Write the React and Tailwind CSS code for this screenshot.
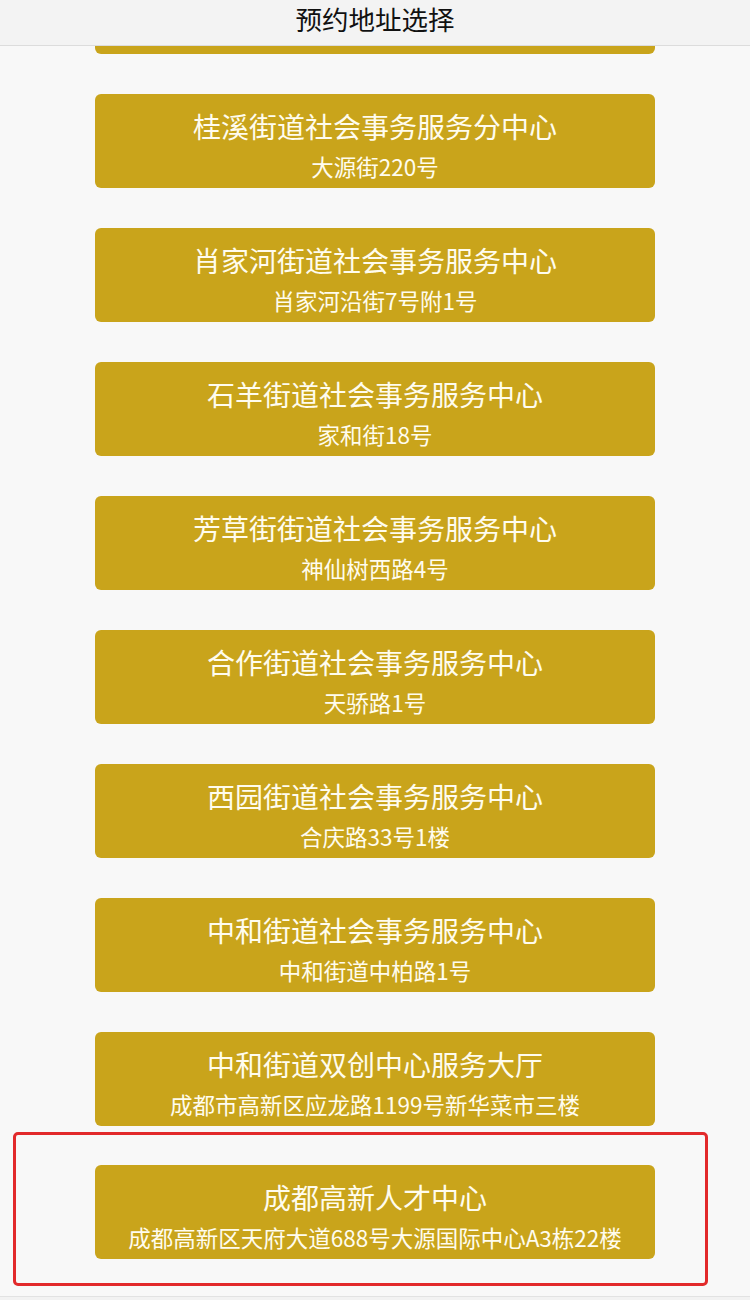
const items = [
  ["桂溪街道社会事务服务分中心", "大源街220号"],
  ["肖家河街道社会事务服务中心", "肖家河沿街7号附1号"],
  ["石羊街道社会事务服务中心", "家和街18号"],
  ["芳草街街道社会事务服务中心", "神仙树西路4号"],
  ["合作街道社会事务服务中心", "天骄路1号"],
  ["西园街道社会事务服务中心", "合庆路33号1楼"],
  ["中和街道社会事务服务中心", "中和街道中柏路1号"],
  ["中和街道双创中心服务大厅", "成都市高新区应龙路1199号新华菜市三楼"],
];

const font = { fontFamily: '"Noto Sans CJK SC", "Noto Sans", sans-serif' };

function Card({ title, sub }) {
  return (
    <div className="w-[560px] h-[94px] rounded-[6px] bg-[#c9a41b] flex flex-col items-center pt-[14px] text-[#fffcee]">
      <div className="text-[28px] leading-[36px]">{title}</div>
      <div className="text-[22.5px] leading-[28px] mt-[8px]">{sub}</div>
    </div>
  );
}

export default function App() {
  return (
    <div className="w-[750px] h-[1300px] bg-[#f8f8f8] flex flex-col overflow-hidden" style={font}>
      <div className="h-[46px] shrink-0 bg-[#f3f3f3] border-b border-[#dcdcdc] flex items-start justify-center pt-[3px]">
        <span className="text-[26.5px] leading-[32px] text-[#111]">预约地址选择</span>
      </div>
      <div className="flex flex-col items-center">
        <div className="w-[560px] h-[8px] rounded-b-[6px] bg-[#c9a41b]" />
        <div className="flex flex-col gap-[40px] mt-[40px]">
          {items.map(([t, s]) => (
            <Card key={t} title={t} sub={s} />
          ))}
        </div>
      </div>
      <div className="mt-[6px] ml-[13px] w-[695px] h-[154px] border-[3px] border-[#e22a2b] rounded-[5px] pt-[30px] pl-[79px]">
        <Card title="成都高新人才中心" sub="成都高新区天府大道688号大源国际中心A3栋22楼" />
      </div>
      <div className="mt-[10px] border-t border-[#e2e2e2] flex-1 bg-[#f2f2f2]" />
    </div>
  );
}
